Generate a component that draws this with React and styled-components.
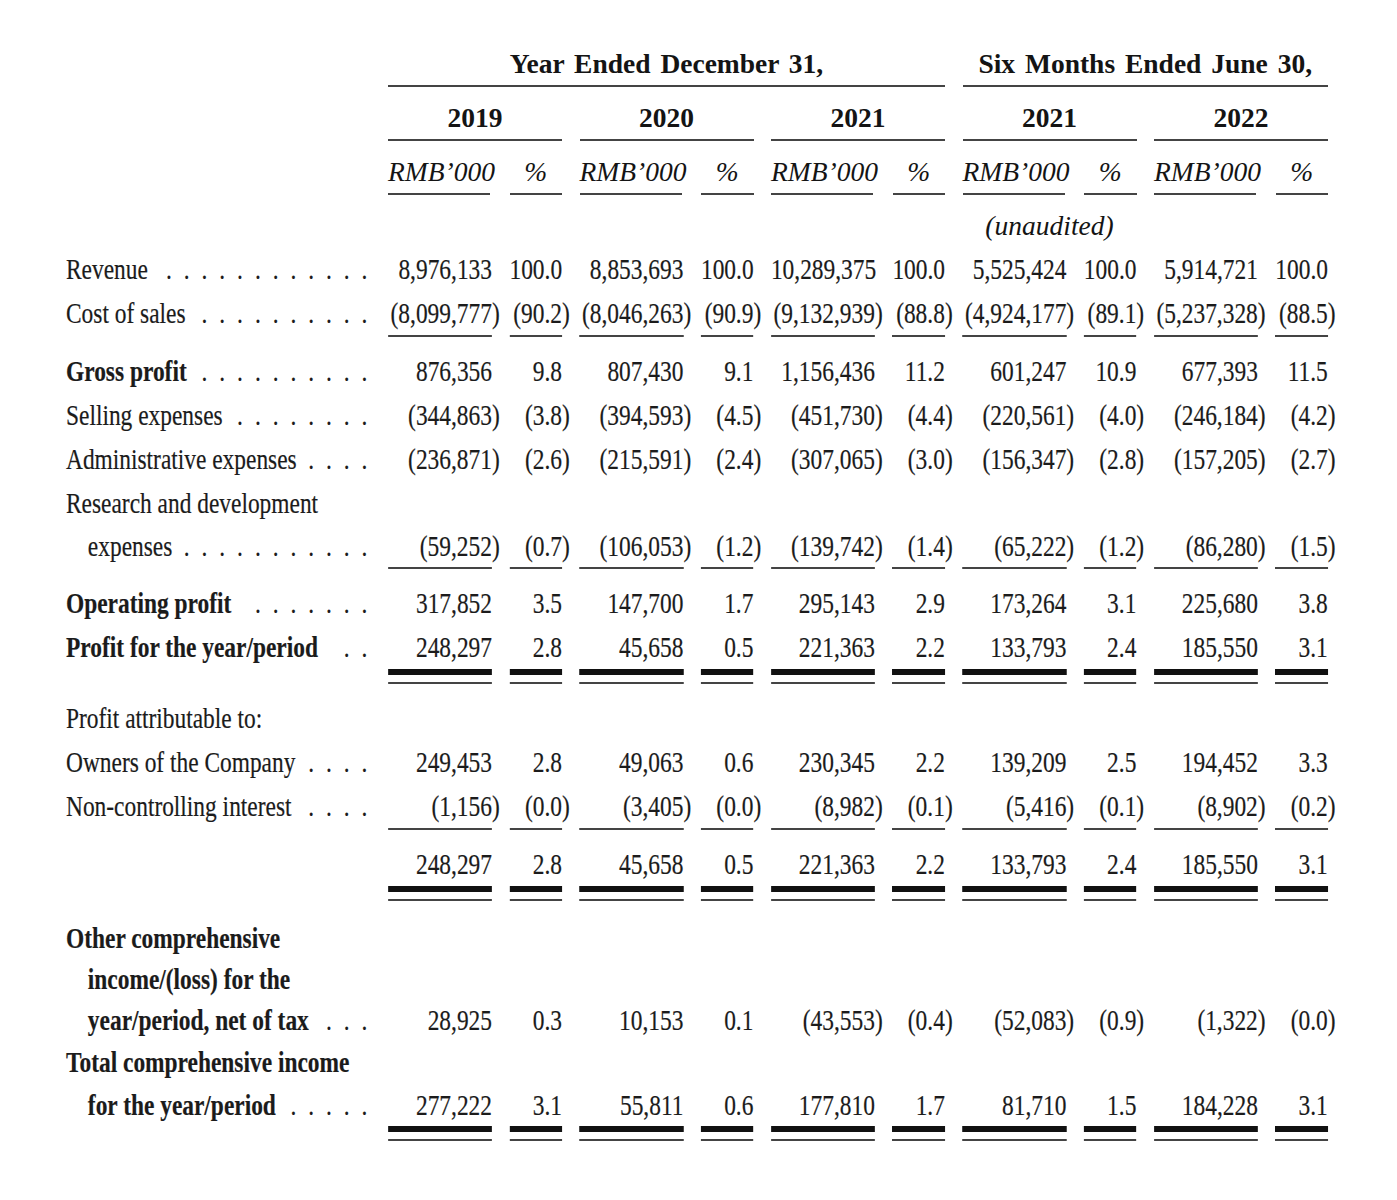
import React from "react";
import styled, { createGlobalStyle } from "styled-components";

// the body of the statement is set in a condensed Times; we squeeze it horizontally
const K = 0.78;
const LABEL = 304.5;
const AMT = 104;
const PCT = 52.5;
const GAP = 17.5;

const cols = (k = 1) =>
  `${LABEL / k}px repeat(5, ${AMT / k}px ${PCT / k}px)`;

const rulePad = (rule) => (rule === "double" ? 15 : rule === "single" ? 2 : 0);

const rows = [
  {
    label: ["Revenue"],
    dots: 12,
    values: ["8,976,133", "100.0", "8,853,693", "100.0", "10,289,375", "100.0", "5,525,424", "100.0", "5,914,721", "100.0"],
  },
  {
    label: ["Cost of sales"],
    dots: 10,
    values: ["(8,099,777)", "(90.2)", "(8,046,263)", "(90.9)", "(9,132,939)", "(88.8)", "(4,924,177)", "(89.1)", "(5,237,328)", "(88.5)"],
    rule: "single",
    space: 12,
  },
  {
    label: ["Gross profit"],
    dots: 10,
    bold: true,
    values: ["876,356", "9.8", "807,430", "9.1", "1,156,436", "11.2", "601,247", "10.9", "677,393", "11.5"],
  },
  {
    label: ["Selling expenses"],
    dots: 8,
    values: ["(344,863)", "(3.8)", "(394,593)", "(4.5)", "(451,730)", "(4.4)", "(220,561)", "(4.0)", "(246,184)", "(4.2)"],
  },
  {
    label: ["Administrative expenses"],
    dots: 4,
    values: ["(236,871)", "(2.6)", "(215,591)", "(2.4)", "(307,065)", "(3.0)", "(156,347)", "(2.8)", "(157,205)", "(2.7)"],
  },
  {
    label: ["Research and development", "expenses"],
    dots: 11,
    values: ["(59,252)", "(0.7)", "(106,053)", "(1.2)", "(139,742)", "(1.4)", "(65,222)", "(1.2)", "(86,280)", "(1.5)"],
    rule: "single",
    lh: 43,
    space: 12,
  },
  {
    label: ["Operating profit"],
    dots: 7,
    bold: true,
    values: ["317,852", "3.5", "147,700", "1.7", "295,143", "2.9", "173,264", "3.1", "225,680", "3.8"],
  },
  {
    label: ["Profit for the year/period"],
    dots: 2,
    bold: true,
    values: ["248,297", "2.8", "45,658", "0.5", "221,363", "2.2", "133,793", "2.4", "185,550", "3.1"],
    rule: "double",
    space: 12,
  },
  { label: ["Profit attributable to:"] },
  {
    label: ["Owners of the Company"],
    dots: 4,
    values: ["249,453", "2.8", "49,063", "0.6", "230,345", "2.2", "139,209", "2.5", "194,452", "3.3"],
  },
  {
    label: ["Non-controlling interest"],
    dots: 4,
    values: ["(1,156)", "(0.0)", "(3,405)", "(0.0)", "(8,982)", "(0.1)", "(5,416)", "(0.1)", "(8,902)", "(0.2)"],
    rule: "single",
    space: 12,
  },
  {
    label: [""],
    values: ["248,297", "2.8", "45,658", "0.5", "221,363", "2.2", "133,793", "2.4", "185,550", "3.1"],
    rule: "double",
    space: 15.5,
  },
  {
    label: ["Other comprehensive", "income/(loss) for the", "year/period, net of tax"],
    dots: 3,
    bold: true,
    lh: 41,
    values: ["28,925", "0.3", "10,153", "0.1", "(43,553)", "(0.4)", "(52,083)", "(0.9)", "(1,322)", "(0.0)"],
  },
  {
    label: ["Total comprehensive income", "for the year/period"],
    dots: 5,
    bold: true,
    lh: 43,
    values: ["277,222", "3.1", "55,811", "0.6", "177,810", "1.7", "81,710", "1.5", "184,228", "3.1"],
    rule: "double",
  },
];

const periods = [
  { year: "2019" },
  { year: "2020" },
  { year: "2021" },
  { year: "2021", note: "(unaudited)" },
  { year: "2022" },
];

function Amount({ text }) {
  if (text.startsWith("(")) {
    return (
      <>
        {text.slice(0, -1)}
        <Paren>)</Paren>
      </>
    );
  }
  return text;
}

function StatementRow({ row }) {
  const last = row.label.length - 1;
  return (
    <Row $lh={row.lh} $space={row.space}>
      <Label $bold={row.bold} $rule={row.rule}>
        {row.label.map((line, i) => (
          <Line key={i} $indent={i > 0}>
            {line}
            {i === last && row.dots ? (
              <Leader>{Array(row.dots).fill(".").join(" ")}</Leader>
            ) : null}
          </Line>
        ))}
      </Label>
      {(row.values || []).map((v, i) => (
        <Value key={i} $rule={row.rule}>
          <Figure $rule={row.rule}>
            <Amount text={v} />
          </Figure>
        </Value>
      ))}
    </Row>
  );
}

export default function App() {
  return (
    <Page>
      <GlobalStyle />
      <HeadRow>
        <HeadCell $col="2 / span 6" $rule>
          Year Ended December 31,
        </HeadCell>
        <HeadCell $col="8 / span 4" $rule>
          Six Months Ended June 30,
        </HeadCell>
      </HeadRow>
      <HeadRow>
        {periods.map((p, i) => (
          <HeadCell key={i} $col={`${2 + i * 2} / span 2`} $rule>
            {p.year}
          </HeadCell>
        ))}
      </HeadRow>
      <HeadRow>
        {periods.map((p, i) => (
          <React.Fragment key={i}>
            <HeadCell $col={`${2 + i * 2}`} $italic $align="right" $rule>
              RMB’000
            </HeadCell>
            <HeadCell $col={`${3 + i * 2}`} $italic $rule>
              %
            </HeadCell>
          </React.Fragment>
        ))}
      </HeadRow>
      <HeadRow $last>
        {periods.map((p, i) =>
          p.note ? (
            <HeadCell key={i} $col={`${2 + i * 2} / span 2`} $italic>
              {p.note}
            </HeadCell>
          ) : null
        )}
      </HeadRow>
      <Body>
        {rows.map((row, i) => (
          <StatementRow key={i} row={row} />
        ))}
      </Body>
    </Page>
  );
}

const GlobalStyle = createGlobalStyle`
  html, body {
    margin: 0;
    background: #fff;
  }
  body {
    font-family: "Liberation Serif", "Times New Roman", serif;
    color: #1b1b1b;
  }
`;

const Page = styled.div`
  width: 1397px;
  height: 1200px;
  box-sizing: border-box;
  padding: 43px 0 0 66px;
  overflow: hidden;
`;

const HeadRow = styled.div`
  display: grid;
  grid-template-columns: ${cols()};
  column-gap: ${GAP}px;
  height: ${(p) => (p.$last ? 42 : 44)}px;
  margin-bottom: ${(p) => (p.$last ? 0 : 10)}px;
`;

const HeadCell = styled.div`
  grid-column: ${(p) => p.$col};
  height: 42px;
  line-height: 42px;
  text-align: ${(p) => p.$align || "center"};
  white-space: nowrap;
  font-size: 27.5px;
  font-style: ${(p) => (p.$italic ? "italic" : "normal")};
  font-weight: ${(p) => (p.$italic ? 400 : 700)};
  word-spacing: ${(p) => (p.$italic ? 0 : 3)}px;
  margin-right: ${(p) => (p.$align === "right" ? 2 : 0)}px;
  color: #141414;
  border-bottom: ${(p) => (p.$rule ? "2px solid #444" : "none")};
`;

const Body = styled.div`
  width: ${(LABEL + 5 * (AMT + PCT) + 10 * GAP) / K}px;
  transform: scaleX(${K});
  transform-origin: left top;
  font-size: 30px;
  -webkit-text-stroke: 0.2px #1b1b1b;
`;

const Row = styled.div`
  display: grid;
  grid-template-columns: ${cols(K)};
  column-gap: ${GAP / K}px;
  align-items: end;
  line-height: ${(p) => p.$lh || 44}px;
  margin-bottom: ${(p) => p.$space || 0}px;
`;

const Label = styled.div`
  min-width: 0;
  font-weight: ${(p) => (p.$bold ? 700 : 400)};
  padding-bottom: ${(p) => rulePad(p.$rule)}px;
`;

const Line = styled.div`
  display: flex;
  white-space: nowrap;
  min-height: 1em;
  padding-left: ${(p) => (p.$indent ? 28 : 0)}px;
`;

const Leader = styled.span`
  margin-left: auto;
  font-weight: 400;
  letter-spacing: 3.9px;
`;

const Value = styled.div`
  text-align: right;
  white-space: nowrap;
  border-bottom: ${(p) => (p.$rule ? "2px solid #444" : "none")};
  padding-bottom: ${(p) => (p.$rule === "double" ? 7 : 0)}px;
`;

const Figure = styled.div`
  border-bottom: ${(p) => (p.$rule === "double" ? "6px solid #111" : "none")};
`;

const Paren = styled.span`
  margin-right: -0.333em;
`;
